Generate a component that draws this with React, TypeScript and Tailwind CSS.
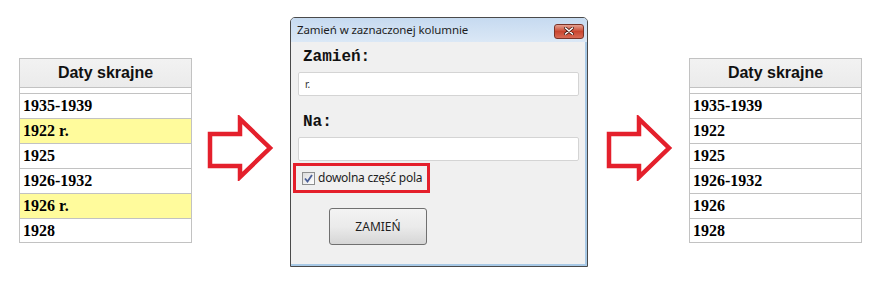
import React from 'react';

type Row = { text: string; hl?: boolean };

const before: Row[] = [
  { text: '1935-1939' },
  { text: '1922 r.', hl: true },
  { text: '1925' },
  { text: '1926-1932' },
  { text: '1926 r.', hl: true },
  { text: '1928' },
];

const after: Row[] = [
  { text: '1935-1939' },
  { text: '1922' },
  { text: '1925' },
  { text: '1926-1932' },
  { text: '1926' },
  { text: '1928' },
];

const DatesTable: React.FC<{ rows: Row[]; className?: string }> = ({ rows, className = '' }) => (
  <div className={`w-[173px] border-x border-[#c2c2c2] bg-white ${className}`}>
    <div className="h-[30px] border-y border-[#c2c2c2] bg-gradient-to-b from-[#f2f2f2] to-[#ebebeb] flex items-center justify-center font-['Liberation_Sans',Arial,sans-serif] font-bold text-[16px] text-[#111]">
      Daty skrajne
    </div>
    <div className="h-[5px]" />
    {rows.map((r, i) => (
      <div
        key={i}
        className={`h-[25px] border-t border-[#c2c2c2] pl-[3px] flex items-center font-['Liberation_Serif','Times_New_Roman',serif] font-bold text-[16px] text-black ${
          r.hl ? 'bg-[#fffb9c]' : 'bg-white'
        } ${i === rows.length - 1 ? 'border-b' : ''}`}
      >
        {r.text}
      </div>
    ))}
  </div>
);

const Arrow: React.FC<{ className?: string }> = ({ className = '' }) => (
  <svg width="70" height="66" viewBox="0 0 70 66" className={className}>
    <polygon
      points="4,19 34,19 34,4 64,33 34,62 34,51 4,51"
      fill="white"
      stroke="#e4202c"
      strokeWidth="4.5"
      strokeLinejoin="miter"
    />
  </svg>
);

const Dialog: React.FC = () => (
  <div className="w-[298px] h-[250px] border border-[#4a4a4a] rounded-t-[5px] bg-[#f0f0f0] flex flex-col overflow-hidden font-['Noto_Sans','Open_Sans',sans-serif]">
    {/* title bar */}
    <div className="h-[24px] bg-gradient-to-b from-[#c6daf0] to-[#dbe8f6] flex items-center justify-between pl-[6px] pr-[3px]">
      <span className="text-[11.5px] text-[#1e1e1e] tracking-[-0.1px]">Zamień w zaznaczonej kolumnie</span>
      <div className="w-[30px] h-[15px] mt-[2px] rounded-[3px] border border-[#7a3328] bg-gradient-to-b from-[#e3a091] via-[#c9452f] to-[#d86a55] flex items-center justify-center">
        <svg width="10" height="8" viewBox="0 0 10 8">
          <path d="M1.5 1 L8.5 7 M8.5 1 L1.5 7" stroke="#4a1a12" strokeWidth="3" strokeLinecap="round" />
          <path d="M1.5 1 L8.5 7 M8.5 1 L1.5 7" stroke="white" strokeWidth="1.6" strokeLinecap="round" />
        </svg>
      </div>
    </div>
    {/* body */}
    <div className="flex-1 border-r-2 border-b-2 border-[#a8c9e6] pl-[7px] pr-[7px]">
      <div className="mt-[6px] ml-[5px] h-[18px] leading-[18px] font-['Liberation_Mono','Courier_New',monospace] font-bold text-[16px] text-[#111]">
        Zamień:
      </div>
      <div className="mt-[6px] h-[24px] w-[281px] bg-white border border-[#d4d4d4] rounded-[2px] flex items-center pl-[6px] text-[10px] text-[#333]">
        r.
      </div>
      <div className="mt-[17px] ml-[5px] h-[18px] leading-[18px] font-['Liberation_Mono','Courier_New',monospace] font-bold text-[16px] text-[#111]">
        Na:
      </div>
      <div className="mt-[6px] h-[24px] w-[281px] bg-white border border-[#d4d4d4] rounded-[2px]" />
      <div className="mt-[2px] -ml-[5px] w-[137px] h-[30px] border-[3px] border-[#e41f2b] flex items-center pl-[6px] gap-[3px]">
        <div className="w-[13px] h-[13px] border border-[#8e8f8f] bg-gradient-to-br from-[#dcdcdc] to-[#ffffff] flex items-center justify-center">
          <svg width="9" height="9" viewBox="0 0 9 9">
            <path d="M1 4.5 L3.5 7.5 L8 1" fill="none" stroke="#4a5f97" strokeWidth="1.8" />
          </svg>
        </div>
        <span className="text-[12px] tracking-[-0.25px] text-[#1e1e1e] leading-none">dowolna część pola</span>
      </div>
      <button className="mt-[15px] ml-[31px] w-[98px] h-[37px] rounded-[3px] border border-[#707070] bg-gradient-to-b from-[#f3f3f3] via-[#ebebeb] to-[#d6d6d6] text-[12px] text-[#1e1e1e] flex items-center justify-center">
        ZAMIEŃ
      </button>
    </div>
  </div>
);

export default function App() {
  return (
    <div className="w-[881px] h-[291px] bg-white flex items-start pl-[19px]">
      <DatesTable rows={before} className="mt-[58px]" />
      <Arrow className="ml-[14px] mt-[115px] shrink-0" />
      <div className="ml-[14px] mt-[17px]">
        <Dialog />
      </div>
      <Arrow className="ml-[17px] mt-[115px] shrink-0" />
      <DatesTable rows={after} className="ml-[14px] mt-[58px]" />
    </div>
  );
}
